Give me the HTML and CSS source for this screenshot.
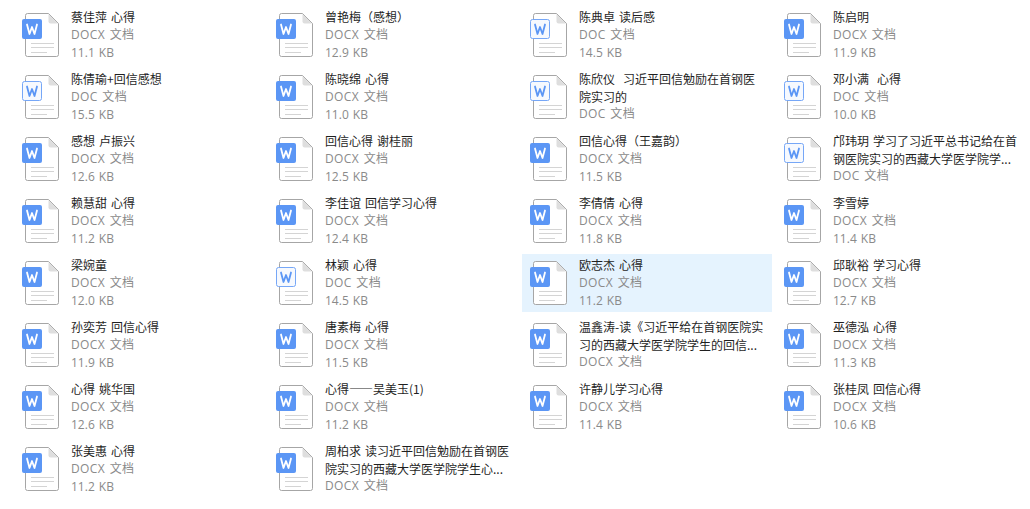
FILE: index.html
```html
<!DOCTYPE html>
<html lang="zh-CN">
<head>
<meta charset="utf-8">
<title>文件列表</title>
<link rel="stylesheet" href="styles.css">
</head>
<body>
<svg class="defs" width="0" height="0" aria-hidden="true">
  <symbol id="page" viewBox="0 0 44 46">
    <path d="M3.500 3.500a2 2 0 0 1 2-2H26.500L36.500 11.500V42.500a2 2 0 0 1-2 2H5.500a2 2 0 0 1-2-2Z" fill="#fff" stroke="#a6a6a6"/>
    <path d="M26.500 2L36 11.500H28.500a2 2 0 0 1-2-2Z" fill="#dedede"/>
    <path d="M9 31.500H32M9 35.500H32M9 40.500H25" stroke="#d4d4d4" fill="none"/>
  </symbol>
  <symbol id="docx" viewBox="0 0 44 46">
    <use href="#page"/>
    <rect x="0" y="7" width="20" height="20" rx="2" fill="#5b96f5"/>
    <path d="M5 12.500L7.500 22L10 15L12.500 22L15 12.500" fill="none" stroke="#fff" stroke-width="1.800" stroke-linejoin="round" stroke-linecap="round"/>
  </symbol>
  <symbol id="doc" viewBox="0 0 44 46">
    <use href="#page"/>
    <rect x="0.500" y="7.500" width="19" height="19" rx="2" fill="#f6f9fe" stroke="#76a7f7"/>
    <path d="M5 12.500L7.500 22L10 15L12.500 22L15 12.500" fill="none" stroke="#5b96f5" stroke-width="1.800" stroke-linejoin="round" stroke-linecap="round"/>
  </symbol>
</svg>
<main class="grid">
<div class="item"><svg class="icon"><use href="#docx"/></svg><div class="info"><div class="name">蔡佳萍 心得</div><div class="type">DOCX 文档</div><div class="size">11.1 KB</div></div></div>
<div class="item"><svg class="icon"><use href="#docx"/></svg><div class="info"><div class="name">曾艳梅（感想）</div><div class="type">DOCX 文档</div><div class="size">12.9 KB</div></div></div>
<div class="item"><svg class="icon"><use href="#doc"/></svg><div class="info"><div class="name">陈典卓 读后感</div><div class="type">DOC 文档</div><div class="size">14.5 KB</div></div></div>
<div class="item"><svg class="icon"><use href="#docx"/></svg><div class="info"><div class="name">陈启明</div><div class="type">DOCX 文档</div><div class="size">11.9 KB</div></div></div>

<div class="item"><svg class="icon"><use href="#doc"/></svg><div class="info"><div class="name">陈倩瑜+回信感想</div><div class="type">DOC 文档</div><div class="size">15.5 KB</div></div></div>
<div class="item"><svg class="icon"><use href="#docx"/></svg><div class="info"><div class="name">陈晓绵 心得</div><div class="type">DOCX 文档</div><div class="size">11.0 KB</div></div></div>
<div class="item"><svg class="icon"><use href="#doc"/></svg><div class="info"><div class="name long">陈欣仪&nbsp; 习近平回信勉励在首钢医院实习的</div><div class="type">DOC 文档</div></div></div>
<div class="item"><svg class="icon"><use href="#doc"/></svg><div class="info"><div class="name">邓小满&nbsp; 心得</div><div class="type">DOC 文档</div><div class="size">10.0 KB</div></div></div>

<div class="item"><svg class="icon"><use href="#docx"/></svg><div class="info"><div class="name">感想 卢振兴</div><div class="type">DOCX 文档</div><div class="size">12.6 KB</div></div></div>
<div class="item"><svg class="icon"><use href="#docx"/></svg><div class="info"><div class="name">回信心得 谢桂丽</div><div class="type">DOCX 文档</div><div class="size">12.5 KB</div></div></div>
<div class="item"><svg class="icon"><use href="#docx"/></svg><div class="info"><div class="name">回信心得（王嘉韵）</div><div class="type">DOCX 文档</div><div class="size">11.5 KB</div></div></div>
<div class="item"><svg class="icon"><use href="#doc"/></svg><div class="info"><div class="name long">邝玮玥 学习了习近平总书记给在首钢医院实习的西藏大学医学院学...</div><div class="type">DOC 文档</div></div></div>

<div class="item"><svg class="icon"><use href="#docx"/></svg><div class="info"><div class="name">赖慧甜 心得</div><div class="type">DOCX 文档</div><div class="size">11.2 KB</div></div></div>
<div class="item"><svg class="icon"><use href="#docx"/></svg><div class="info"><div class="name">李佳谊 回信学习心得</div><div class="type">DOCX 文档</div><div class="size">12.4 KB</div></div></div>
<div class="item"><svg class="icon"><use href="#docx"/></svg><div class="info"><div class="name">李倩倩 心得</div><div class="type">DOCX 文档</div><div class="size">11.8 KB</div></div></div>
<div class="item"><svg class="icon"><use href="#docx"/></svg><div class="info"><div class="name">李雪婷</div><div class="type">DOCX 文档</div><div class="size">11.4 KB</div></div></div>

<div class="item"><svg class="icon"><use href="#docx"/></svg><div class="info"><div class="name">梁婉童</div><div class="type">DOCX 文档</div><div class="size">12.0 KB</div></div></div>
<div class="item"><svg class="icon"><use href="#doc"/></svg><div class="info"><div class="name">林颖 心得</div><div class="type">DOC 文档</div><div class="size">14.5 KB</div></div></div>
<div class="item selected"><svg class="icon"><use href="#docx"/></svg><div class="info"><div class="name">欧志杰 心得</div><div class="type">DOCX 文档</div><div class="size">11.2 KB</div></div></div>
<div class="item"><svg class="icon"><use href="#docx"/></svg><div class="info"><div class="name">邱耿裕 学习心得</div><div class="type">DOCX 文档</div><div class="size">12.7 KB</div></div></div>

<div class="item"><svg class="icon"><use href="#docx"/></svg><div class="info"><div class="name">孙奕芳 回信心得</div><div class="type">DOCX 文档</div><div class="size">11.9 KB</div></div></div>
<div class="item"><svg class="icon"><use href="#docx"/></svg><div class="info"><div class="name">唐素梅 心得</div><div class="type">DOCX 文档</div><div class="size">11.5 KB</div></div></div>
<div class="item"><svg class="icon"><use href="#docx"/></svg><div class="info"><div class="name long">温鑫涛-读《习近平给在首钢医院实习的西藏大学医学院学生的回信...</div><div class="type">DOCX 文档</div></div></div>
<div class="item"><svg class="icon"><use href="#docx"/></svg><div class="info"><div class="name">巫德泓 心得</div><div class="type">DOCX 文档</div><div class="size">11.3 KB</div></div></div>

<div class="item"><svg class="icon"><use href="#docx"/></svg><div class="info"><div class="name">心得 姚华国</div><div class="type">DOCX 文档</div><div class="size">12.6 KB</div></div></div>
<div class="item"><svg class="icon"><use href="#docx"/></svg><div class="info"><div class="name">心得——吴美玉(1)</div><div class="type">DOCX 文档</div><div class="size">11.2 KB</div></div></div>
<div class="item"><svg class="icon"><use href="#docx"/></svg><div class="info"><div class="name">许静儿学习心得</div><div class="type">DOCX 文档</div><div class="size">11.4 KB</div></div></div>
<div class="item"><svg class="icon"><use href="#docx"/></svg><div class="info"><div class="name">张桂凤 回信心得</div><div class="type">DOCX 文档</div><div class="size">10.6 KB</div></div></div>

<div class="item"><svg class="icon"><use href="#docx"/></svg><div class="info"><div class="name">张美惠 心得</div><div class="type">DOCX 文档</div><div class="size">11.2 KB</div></div></div>
<div class="item"><svg class="icon"><use href="#docx"/></svg><div class="info"><div class="name long">周柏求 读习近平回信勉励在首钢医院实习的西藏大学医学院学生心...</div><div class="type">DOCX 文档</div></div></div>
</main>
</body>
</html>
```
FILE: styles.css
```css
* { box-sizing: border-box; }
html, body { margin: 0; background: #fff; }
body { font-family: "Open Sans", "Noto Sans CJK SC", sans-serif; font-size: 12px; overflow: hidden; }
.defs { position: absolute; }
.grid {
  display: grid;
  grid-template-columns: repeat(4, 250px);
  grid-auto-rows: 58px;
  gap: 4px;
  padding: 6px 14px;
}
.item { display: flex; align-items: flex-start; padding: 2px 0 0 8px; }
.selected { background: #e5f3fe; }
.icon { flex: none; width: 44px; height: 46px; margin: 4px 5px 0 0; }
.info { width: 186px; line-height: 18px; }
.name {
  color: #1f1f1f;
  word-spacing: 1.3px;
  font-family: "Noto Sans CJK SC", sans-serif;
}
.name.long { line-height: 17.5px; }
.type, .size { color: #8a8a8a; white-space: nowrap; }
.type { letter-spacing: 0.4px; word-spacing: 1px; }
.size { word-spacing: 1px; }
```
